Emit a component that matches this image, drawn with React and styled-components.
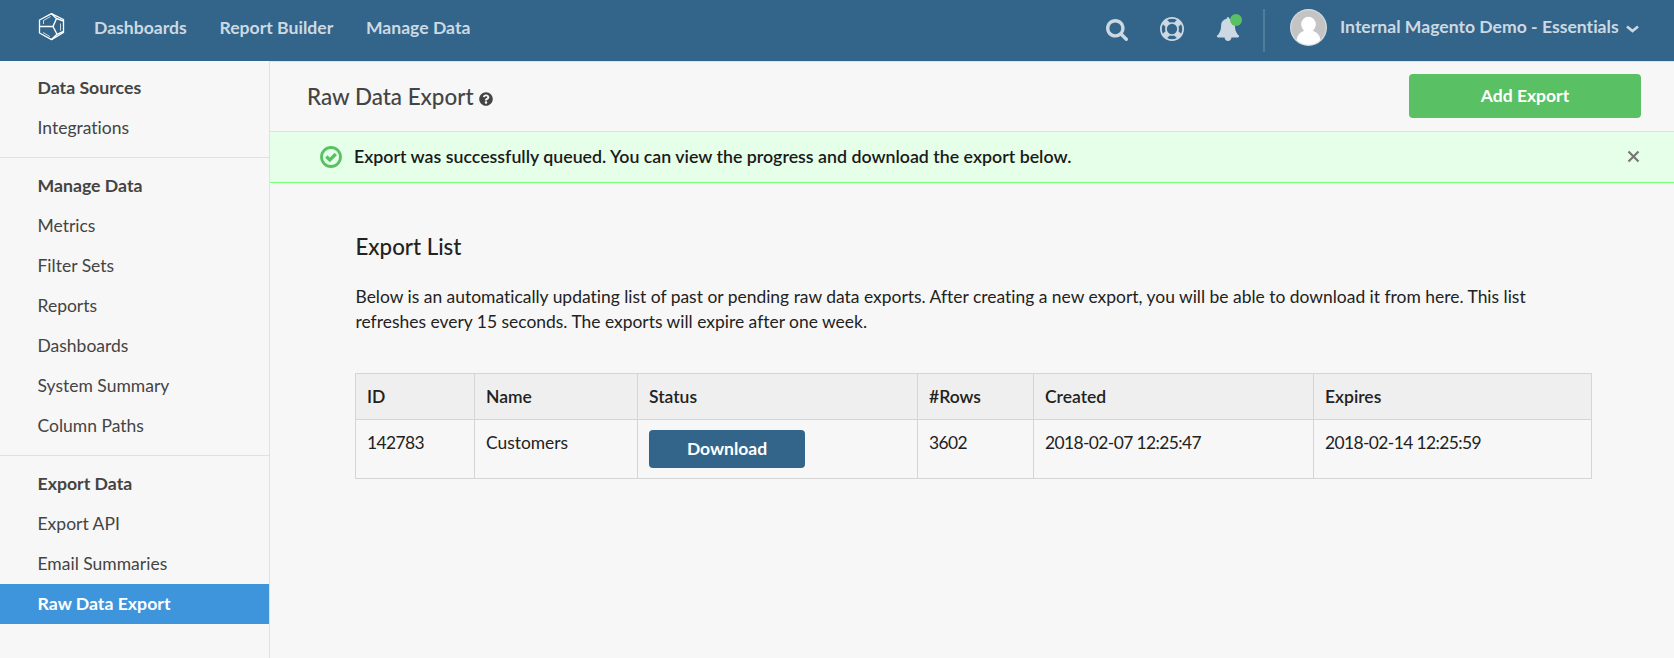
import React from "react";
import styled, { createGlobalStyle } from "styled-components";
import { FaQuestionCircle } from "react-icons/fa";

const GlobalStyle = createGlobalStyle`
  * { box-sizing: border-box; }
  body {
    margin: 0;
    background: #f7f7f7;
    color: #222;
    font-family: Lato, "Open Sans", sans-serif;
    font-size: 17.4px;
    font-variant-ligatures: none;
  }
  button { font-family: inherit; border: 0; cursor: pointer; }
`;

const Page = styled.div`
  display: flex;
  flex-direction: column;
  height: 658px;
  overflow: hidden;
`;

const TopBar = styled.header`
  display: flex;
  align-items: flex-start;
  height: 61px;
  padding: 0 35px 0 38px;
  background: #33658a;
  color: #ccd9e2;
  font-size: 17.6px;
  font-weight: 700;
  flex: none;
`;

const Logo = styled.svg`
  width: 28px;
  height: 30px;
  margin: 12px 28px 0 0;
  fill: none;
  stroke: #fff;
`;

const NavLink = styled.a`
  margin-right: 32.7px;
  line-height: 22px;
  padding-top: 17px;
  white-space: nowrap;
`;

const Tools = styled.div`
  display: flex;
  align-items: flex-start;
  margin-left: auto;
`;

const ToolIcon = styled.svg`
  display: block;
  width: ${(p) => p.$size}px;
  height: ${(p) => p.$size}px;
  fill: #ccd9e2;
`;

const Tool = styled.div`
  position: relative;
  margin: ${(p) => p.$top}px ${(p) => p.$gap}px 0 0;
`;

const Dot = styled.span`
  position: absolute;
  top: -3px;
  right: -2px;
  width: 12px;
  height: 12px;
  border-radius: 50%;
  background: #59c164;
`;

const Divider = styled.div`
  width: 2px;
  height: 43px;
  margin: 9px 25px 0 0;
  background: #517d9d;
`;

const Avatar = styled.svg`
  width: 37px;
  height: 37px;
  margin: 9px 13px 0 0;
`;

const Account = styled.div`
  display: flex;
  align-items: center;
  justify-content: space-between;
  width: 299px;
  padding-top: 16px;
  line-height: 22px;
  white-space: nowrap;

  svg { margin-top: 3px; }
`;

const Body = styled.div`
  display: flex;
  flex: 1;
`;

const Sidebar = styled.nav`
  width: 270px;
  flex: none;
  border-right: 1px solid #e1e1e1;
  color: #444;
`;

const Section = styled.section`
  padding: ${(p) => (p.$first ? 7 : 8)}px 0 9px;
  border-bottom: ${(p) => (p.$last ? 0 : 1)}px solid #e1e1e1;
`;

const SideItem = styled.div`
  height: 40px;
  padding-left: 37.5px;
  line-height: ${(p) => (p.$bold ? 39 : 40)}px;
  font-size: ${(p) => (p.$bold ? 17.7 : 17.5)}px;
  font-weight: ${(p) => (p.$bold ? 700 : 400)};
  background: ${(p) => (p.$active ? "#3e95db" : "transparent")};
  color: ${(p) => (p.$active ? "#fff" : "inherit")};
`;

const Main = styled.main`
  flex: 1;
  border-top: 1px solid #e1e1e1;
`;

const TitleBar = styled.div`
  display: flex;
  align-items: flex-start;
  justify-content: space-between;
  height: 70px;
  padding: 12px 33px 0 37px;
  border-bottom: 1px solid #e1e1e1;
`;

const Title = styled.h1`
  display: flex;
  align-items: center;
  gap: 5px;
  margin: 0;
  color: #444;
  font-size: 22.4px;
  font-weight: 500;
  line-height: 45px;

  svg { width: 14px; height: 14px; margin-top: 4px; }
`;

const AddButton = styled.button`
  width: 232px;
  height: 44px;
  padding: 0 0 1px;
  border-radius: 4px;
  background: #59c164;
  color: #fff;
  font-size: 17.5px;
  font-weight: 700;
`;

const Alert = styled.div`
  display: flex;
  align-items: center;
  height: 51px;
  padding: 0 34px 2px 50px;
  border-bottom: 1px solid #75ff75;
  background: #e6ffe8;
  color: #1a1a1a;
  font-size: 17.78px;
  font-weight: 600;
`;

const CheckIcon = styled.svg`
  width: 22px;
  height: 22px;
  margin: 2px 12px 0 0;
  fill: none;
  stroke: #59c164;
`;

const AlertText = styled.span`
  flex: 1;
  white-space: nowrap;
`;

const CloseIcon = styled.svg`
  width: 13px;
  height: 13px;
  fill: none;
  stroke: #777;
  stroke-width: 2.2;
`;

const Content = styled.div`
  padding: 50px 82px 0 85.5px;
`;

const Heading = styled.h2`
  margin: 0;
  font-size: 22.3px;
  font-weight: 500;
  line-height: 28px;
`;

const Intro = styled.p`
  margin: 23px 0 0;
  font-size: 17.44px;
  line-height: 25px;
  white-space: pre-line;
`;

const Table = styled.table`
  width: 1237px;
  margin-top: 39px;
  margin-left: -0.5px;
  border-collapse: collapse;
  table-layout: fixed;
`;

const Col = styled.col`
  width: ${(p) => p.$w}px;
`;

const HeadCell = styled.th`
  height: 46px;
  padding: 0 11px;
  border: 1px solid #d5d5d5;
  background: #efefef;
  text-align: left;
  font-size: 17.5px;
  font-weight: 600;
`;

const Cell = styled.td`
  height: 59px;
  padding: 10px 11px;
  border: 1px solid #d5d5d5;
  vertical-align: top;
  line-height: 25px;
  letter-spacing: ${(p) => (p.$numeric ? "-0.6px" : "normal")};
`;

const DownloadButton = styled.button`
  display: block;
  width: 156px;
  height: 38px;
  padding: 0 0 2px;
  border-radius: 4px;
  background: #33658a;
  color: #fff;
  font-size: 17.5px;
  font-weight: 700;
`;

const sections = [
  { title: "Data Sources", items: ["Integrations"] },
  {
    title: "Manage Data",
    items: ["Metrics", "Filter Sets", "Reports", "Dashboards", "System Summary", "Column Paths"],
  },
  { title: "Export Data", items: ["Export API", "Email Summaries", "Raw Data Export"] },
];

const columns = [
  ["ID", 119],
  ["Name", 163],
  ["Status", 280],
  ["#Rows", 116],
  ["Created", 280],
  ["Expires", 278],
];

export default function App() {
  return (
    <Page>
      <GlobalStyle />
      <TopBar>
        <Logo viewBox="0 0 28 30" strokeLinejoin="round">
          <path strokeWidth="1.3" d="M13.5 1.7 25.5 7.5V20.5L13.5 27.6 1.5 21V8Z" />
          <path
            strokeWidth="1.4"
            d="M2 14.5H15L18.5 6.5 13.5 1.7M15 14.5 19 22.3 13.5 27.6M18.5 6.5 25.5 9M19 22.3 25.5 19.5"
          />
          <path strokeWidth="0.9" opacity="0.85" d="M5.5 12V8.5L12.5 4.5M22.5 11.5V18.5M5 20.5 12 24.6" />
        </Logo>
        <NavLink>Dashboards</NavLink>
        <NavLink>Report Builder</NavLink>
        <NavLink>Manage Data</NavLink>
        <Tools>
          <Tool $top={18.5} $gap={32}>
            <ToolIcon $size={22} viewBox="64 128 1664 1664">
              <path d="M1216 832q0-185-131.5-316.5t-316.5-131.5-316.5 131.5-131.5 316.5 131.5 316.5 316.5 131.5 316.5-131.5 131.5-316.5zm512 832q0 52-38 90t-90 38q-54 0-90-38l-343-342q-179 124-399 124-143 0-273.5-55.5t-225-150-150-225-55.5-273.5 55.5-273.5 150-225 225-150 273.5-55.5 273.5 55.5 225 150 150 225 55.5 273.5q0 220-124 399l343 343q37 37 37 90z" />
            </ToolIcon>
          </Tool>
          <Tool $top={16.5} $gap={32}>
            <ToolIcon $size={24} viewBox="0 0 1792 1792">
              <path d="M896 0q182 0 348 71t286 191 191 286 71 348-71 348-191 286-286 191-348 71-348-71-286-191-191-286-71-348 71-348 191-286 286-191 348-71zm0 128q-190 0-361 90l194 194q82-28 167-28t167 28l194-194q-171-90-361-90zm-678 1129l194-194q-28-82-28-167t28-167l-194-194q-90 171-90 361t90 361zm678 407q190 0 361-90l-194-194q-82 28-167 28t-167-28l-194 194q171 90 361 90zm0-384q159 0 271.5-112.5t112.5-271.5-112.5-271.5-271.5-112.5-271.5 112.5-112.5 271.5 112.5 271.5 271.5 112.5zm484-217l194 194q90-171 90-361t-90-361l-194 194q28 82 28 167t-28 167z" />
            </ToolIcon>
          </Tool>
          <Tool $top={16.5} $gap={23}>
            <ToolIcon $size={24} viewBox="0 0 1792 1792">
              <path d="M1728 1408q0 52-38 90t-90 38h-448q0 106-75 181t-181 75-181-75-75-181h-448q-52 0-90-38t-38-90q50-42 91-88t85-119.5 74.5-158.5 50-206 19.5-260q0-152 117-282.5t307-158.5q-8-19-8-39 0-40 28-68t68-28 68 28 28 68q0 20-8 39 190 28 307 158.5t117 282.5q0 139 19.5 260t50 206 74.5 158.5 85 119.5 91 88z" />
            </ToolIcon>
            <Dot />
          </Tool>
          <Divider />
          <Avatar viewBox="0 0 37 37">
            <defs>
              <clipPath id="avatar-clip">
                <circle cx="18.5" cy="18.5" r="17.3" />
              </clipPath>
            </defs>
            <circle cx="18.5" cy="18.5" r="18.5" fill="#d3dde5" />
            <circle cx="18.5" cy="18.5" r="17.3" fill="#c4c4c4" />
            <g clipPath="url(#avatar-clip)" fill="#fff">
              <ellipse cx="18.5" cy="15.5" rx="7.3" ry="7.8" />
              <path d="M6.5 37V31C7.5 25.5 11 22.5 15 21.5H22C26 22.5 29.5 25.5 30.5 31V37Z" />
            </g>
          </Avatar>
          <Account>
            <span>Internal Magento Demo - Essentials</span>
            <svg width="13" height="8" viewBox="0 0 13 8" fill="none" stroke="#ccd9e2" strokeWidth="2.6">
              <path d="M1 1.5 6.5 6 12 1.5" />
            </svg>
          </Account>
        </Tools>
      </TopBar>
      <Body>
        <Sidebar>
          {sections.map((s, i) => (
            <Section key={s.title} $first={i === 0} $last={i === sections.length - 1}>
              <SideItem $bold>{s.title}</SideItem>
              {s.items.map((item) => {
                const active = item === "Raw Data Export";
                return (
                  <SideItem key={item} $bold={active} $active={active}>
                    {item}
                  </SideItem>
                );
              })}
            </Section>
          ))}
        </Sidebar>
        <Main>
          <TitleBar>
            <Title>
              Raw Data Export <FaQuestionCircle />
            </Title>
            <AddButton>Add Export</AddButton>
          </TitleBar>
          <Alert>
            <CheckIcon viewBox="0 0 22 22">
              <circle cx="11" cy="11" r="9.5" strokeWidth="2.8" />
              <path d="M6.3 10.5 9.8 14 15.8 8" strokeWidth="3.2" />
            </CheckIcon>
            <AlertText>
              Export was successfully queued. You can view the progress and download the export below.
            </AlertText>
            <CloseIcon viewBox="0 0 13 13">
              <path d="M1.5 1.5 11.5 11.5M11.5 1.5 1.5 11.5" />
            </CloseIcon>
          </Alert>
          <Content>
            <Heading>Export List</Heading>
            <Intro>
              {"Below is an automatically updating list of past or pending raw data exports. After creating a new export, you will be able to download it from here. This list\nrefreshes every 15 seconds. The exports will expire after one week."}
            </Intro>
            <Table>
              <colgroup>
                {columns.map(([name, w]) => (
                  <Col key={name} $w={w} />
                ))}
              </colgroup>
              <thead>
                <tr>
                  {columns.map(([name]) => (
                    <HeadCell key={name}>{name}</HeadCell>
                  ))}
                </tr>
              </thead>
              <tbody>
                <tr>
                  <Cell $numeric>142783</Cell>
                  <Cell>Customers</Cell>
                  <Cell>
                    <DownloadButton>Download</DownloadButton>
                  </Cell>
                  <Cell $numeric>3602</Cell>
                  <Cell $numeric>2018-02-07 12:25:47</Cell>
                  <Cell $numeric>2018-02-14 12:25:59</Cell>
                </tr>
              </tbody>
            </Table>
          </Content>
        </Main>
      </Body>
    </Page>
  );
}
